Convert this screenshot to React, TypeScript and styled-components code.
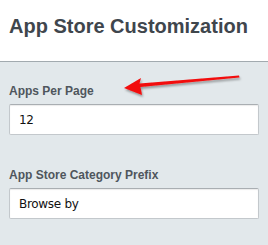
import styled, { createGlobalStyle } from 'styled-components'

const GlobalStyle = createGlobalStyle`
    html, body {
        margin: 0;
        padding: 0;
        background: #e2e8eb;
    }
`

const fields = [
    { label: 'Apps Per Page', value: '12' },
    { label: 'App Store Category Prefix', value: 'Browse by' },
]

const Arrow = () => (
    <ArrowSvg width="130" height="30" viewBox="0 0 130 30">
        <defs>
            <filter id="arrowShadow" x="-10%" y="-50%" width="120%" height="200%">
                <feDropShadow dx="1" dy="2" stdDeviation="1.2" floodColor="#000" floodOpacity="0.35" />
            </filter>
        </defs>
        <path
            d="M4 17 L21 7 L19.5 12.5 L119 4.5 L119.5 6.5 L20.5 16 L22 24 Z"
            fill="#f20d0d"
            filter="url(#arrowShadow)"
        />
    </ArrowSvg>
)

const App = () => {
    return (
        <>
            <GlobalStyle />
            <Page>
                <Header>
                    <Title>App Store Customization</Title>
                </Header>
                <Panel>
                    {fields.map((f, i) => (
                        <Field key={f.label} $first={i === 0}>
                            <Label>{f.label}</Label>
                            <Input type="text" defaultValue={f.value} readOnly />
                        </Field>
                    ))}
                    <Arrow />
                </Panel>
            </Page>
        </>
    )
}

export default App

const Page = styled.div`
    width: 268px;
    height: 245px;
    overflow: hidden;
    display: flex;
    flex-direction: column;
`

const Header = styled.header`
    height: 62px;
    box-sizing: border-box;
    padding: 15px 9px 0;
    background: #ffffff;
    border-bottom: 1px solid #a2aaaf;
`

const Title = styled.h1`
    margin: 0;
    font-family: 'Liberation Sans', Arial, sans-serif;
    font-size: 20px;
    font-weight: bold;
    line-height: 23px;
    color: #3f464d;
`

const Panel = styled.div`
    position: relative;
    flex: 1;
    padding: 0 9px;
    background: #e2e8eb;
`

const Field = styled.div<{ $first?: boolean }>`
    display: flex;
    flex-direction: column;
    gap: 5px;
    margin-top: ${(p) => (p.$first ? '22px' : '33px')};
`

const Label = styled.label`
    font-family: 'Liberation Sans', Arial, sans-serif;
    font-size: 12px;
    font-weight: bold;
    line-height: 15px;
    color: #4f565d;
`

const Input = styled.input`
    box-sizing: border-box;
    width: 250px;
    height: 31px;
    margin: 0;
    padding: 0 9px;
    border: 1px solid #c3c8cc;
    border-top-color: #a9aeb2;
    border-radius: 2px;
    background: #ffffff;
    box-shadow: inset 0 1px 1px rgba(0, 0, 0, 0.08);
    font-family: 'DejaVu Sans', Verdana, sans-serif;
    font-size: 12px;
    letter-spacing: -0.3px;
    color: #111111;
    outline: none;
`

const ArrowSvg = styled.svg`
    position: absolute;
    left: 120px;
    top: 9px;
    pointer-events: none;
`
